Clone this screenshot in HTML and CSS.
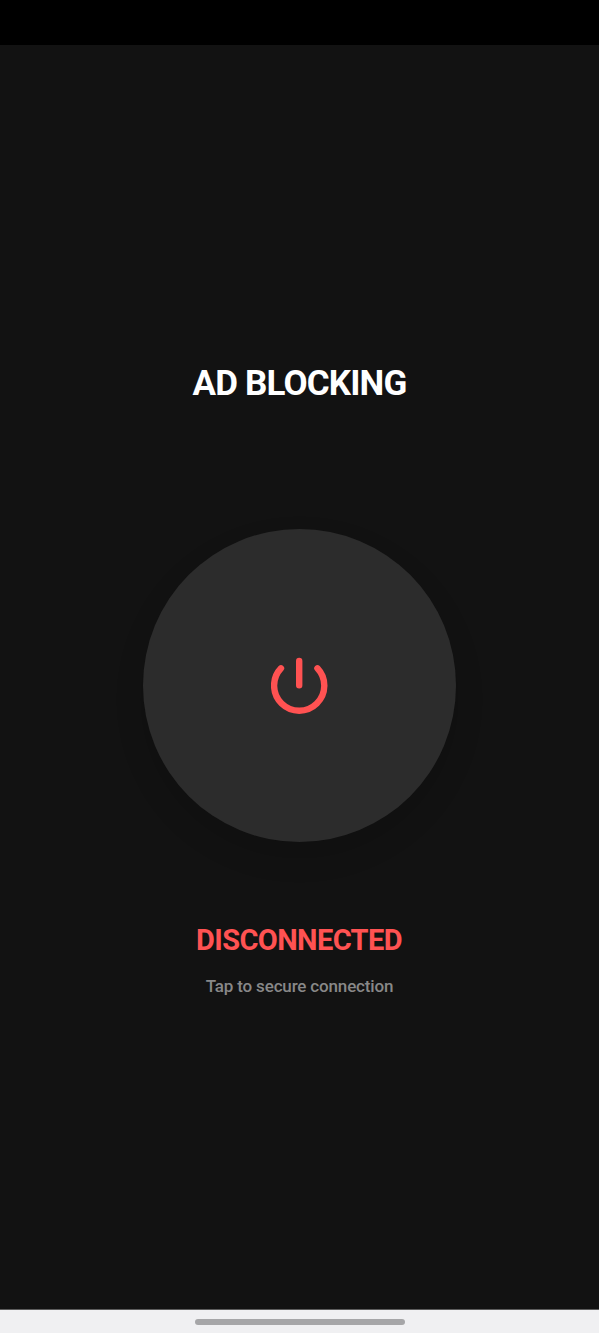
FILE: index.html
```html
<!DOCTYPE html>
<html lang="en">
<head>
<meta charset="utf-8">
<title>Ad Blocking</title>
<link rel="stylesheet" href="styles.css">
</head>
<body>
<div class="status-bar"></div>
<main class="screen">
  <h1 class="title">AD BLOCKING</h1>
  <button class="power" aria-label="Connect">
    <svg class="power-icon" viewBox="0 0 58 58">
      <path d="M28.2 4V28.3M10 11.3A25.1 25.1 0 1 0 46.4 11.3"/>
    </svg>
  </button>
  <p class="state">DISCONNECTED</p>
  <p class="hint">Tap to secure connection</p>
</main>
<div class="nav-bar"><div class="handle"></div></div>
</body>
</html>
```
FILE: styles.css
```css
body {
  margin: 0;
  height: 1333px;
  display: flex;
  flex-direction: column;
  background: #121212;
  font-family: Roboto, sans-serif;
  text-align: center;
}
.status-bar { height: 45px; background: #000; }
.screen {
  flex: 1;
  display: flex;
  flex-direction: column;
  align-items: center;
}
.title {
  margin: 318px 0 0;
  font-size: 35px;
  line-height: 42px;
  font-weight: 700;
  letter-spacing: -0.85px;
  color: #fff;
  white-space: nowrap;
}
.power {
  margin: 124px 0 0;
  width: 312.6px;
  height: 313px;
  padding: 0;
  border: 0;
  border-radius: 50%;
  background: #2c2c2c;
  box-shadow: 0 14px 30px rgba(0, 0, 0, 0.14);
  display: flex;
  align-items: center;
  justify-content: center;
}
.power-icon {
  width: 58px;
  height: 58px;
  fill: none;
  stroke: #ff5252;
  stroke-width: 6.4;
  stroke-linecap: round;
}
.state {
  margin: 80px 1px 0 0;
  font-size: 29px;
  line-height: 36px;
  font-weight: 700;
  letter-spacing: -0.6px;
  color: #ff5252;
}
.hint {
  margin: 17px 0 0;
  font-size: 17px;
  line-height: 22px;
  font-weight: 500;
  letter-spacing: -0.16px;
  color: #888;
}
.nav-bar {
  box-sizing: border-box;
  height: 24px;
  padding-top: 1px;
  border-top: 1px solid #5c5c5c;
  display: flex;
  align-items: center;
  justify-content: center;
  background: #f0f0f2;
}
.handle { width: 210px; height: 6px; border-radius: 3px; background: #a6a6a8; }
```
